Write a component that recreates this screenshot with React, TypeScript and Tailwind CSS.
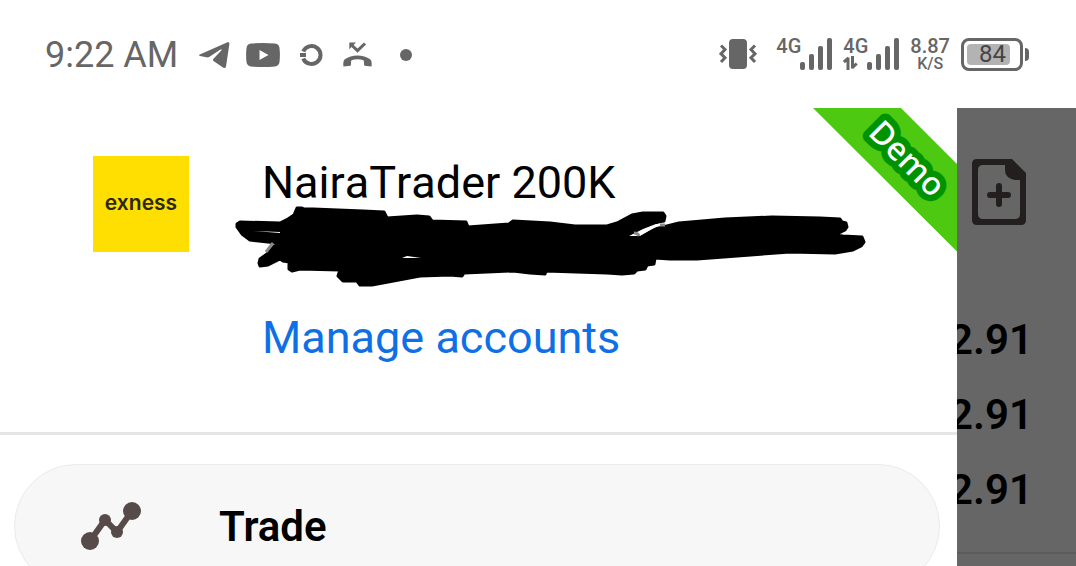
import React from 'react';

const prices = [
  { id: 1, value: '2.91' },
  { id: 2, value: '2.91' },
  { id: 3, value: '2.91' },
];

const TelegramIcon = () => (
  <svg width="31" height="27" viewBox="0 0 31 27" fill="currentColor">
    <path d="M.8 12.500L28.500.300Q30.600-.200 30.400 2L27 24.500Q26.400 27 24 25.500L14.500 19Q13.300 18 14.500 16.700L22.500 8.200Q23.200 7 21.500 7.600L10.500 14.800Q9 15.700 7.500 15.300L1 14Q-.600 13.300.8 12.500Z" />
  </svg>
);

const YoutubeIcon = () => (
  <svg width="34" height="24" viewBox="0 0 34 24" fill="currentColor">
    <path
      fillRule="evenodd"
      d="M5 .6Q17-.5 29 .6 33 1 33.5 5 34.3 12 33.5 19 33 23 29 23.4 17 24.5 5 23.4 1 23 .5 19-.3 12 .5 5 1 1 5 .6ZM13.5 7v10l9-5Z"
    />
  </svg>
);

const RingIcon = () => (
  <svg width="23" height="24" viewBox="0 0 23 24" fill="none" stroke="currentColor">
    <path d="M3.200 8.600A9 9 0 1 1 3.200 15.400" strokeWidth="4" />
    <path d="M0 12h6" strokeWidth="4" />
  </svg>
);

const MissedCallIcon = () => (
  <svg width="29" height="26" viewBox="0 0 29 26" fill="none">
    <path d="M8.500 3l6 5.700L22 1.500" stroke="currentColor" strokeWidth="3" />
    <path d="M6.300.500h6.700L6.300 7.300z" fill="currentColor" />
    <path
      d="M.5 24.500C0 22 .2 19.500 1.500 17.500 9 12.300 20 12.300 27.500 17.500 28.800 19.500 29 22 28.500 24.500L21.500 23.800C20.500 22.500 21.500 19.800 20.500 18.200 17 17 12 17 8.500 18.200 7.500 19.800 8.500 22.500 7.500 23.800Z"
      fill="currentColor"
    />
  </svg>
);

const VibrateIcon = () => (
  <svg width="38" height="32" viewBox="0 0 38 32" fill="none" stroke="currentColor" strokeWidth="3">
    <rect x="10" y="1" width="18" height="30" rx="4" fill="currentColor" stroke="none" />
    <path d="M2 7.500l4 4-4 4.300 4 4-4 4.200M36 7.500l-4 4 4 4.300-4 4 4 4.200" />
  </svg>
);

const SignalBars = () => (
  <svg width="32" height="32" viewBox="0 0 32 32" fill="currentColor">
    <rect x="0" y="24" width="5" height="8" rx="2" />
    <rect x="9" y="16" width="5" height="16" rx="2" />
    <rect x="18" y="8" width="5" height="24" rx="2" />
    <rect x="27" y="0" width="5" height="32" rx="2" />
  </svg>
);

const DataArrows = () => (
  <svg width="15" height="14" viewBox="0 0 15 14" fill="none" stroke="currentColor" strokeWidth="3">
    <path d="M5 14V1.500M5.500 2L.800 6M9.500 0v12.500M9 12l4.700-4.500" />
  </svg>
);

const Network = ({ data }: { data?: boolean }) => (
  <div className="flex">
    <div className="flex h-8 w-6 flex-col justify-between">
      <span className="text-[20px] leading-4 font-medium">4G</span>
      {data && <DataArrows />}
    </div>
    <SignalBars />
  </div>
);

const StatusBar = () => (
  <header className="flex h-[108px] shrink-0 items-center justify-between pr-[47px] pl-[45px] text-[#666]">
    <div className="flex items-center pt-0.5">
      <time className="text-[36px] leading-[42px]">9:22 AM</time>
      <div className="ml-[21px] flex items-center">
        <TelegramIcon />
        <div className="ml-4 flex items-center gap-5">
          <YoutubeIcon />
          <RingIcon />
          <MissedCallIcon />
        </div>
        <span className="ml-7 size-3 rounded-full bg-current" />
      </div>
    </div>
    <div className="flex items-center gap-[11px]">
      <div className="mr-2">
        <VibrateIcon />
      </div>
      <Network />
      <Network data />
      <div className="flex h-8 flex-col items-center justify-between font-medium">
        <span className="text-[20px] leading-4">8.87</span>
        <span className="text-[16px] leading-3">K/S</span>
      </div>
      <div className="flex items-center gap-0.5">
        <div className="flex h-[33px] w-[62px] rounded-lg border-[3px] border-current p-[3px]">
          <div className="flex w-[43px] items-center justify-end rounded-sm bg-[#b3b3b3] pr-1 text-[24px] text-[#444]">
            84
          </div>
        </div>
        <span className="h-[13px] w-1 rounded-r bg-current" />
      </div>
    </div>
  </header>
);

const Scribble = () => (
  <svg
    className="-ml-7 block shrink-0 overflow-visible"
    width="634"
    height="77"
    viewBox="234 210 634 77"
    aria-hidden="true"
  >
    <path
      fillRule="evenodd"
      d="M240 222L280 223 288 219 294 215 297 208 302 208 304 209 313 209 363 211 384 212 387 218 417 216 429 217 432 221 466 222 468 227 509 224 513 221 550 223 575 226 607 226 617 223 632 215 643 213 663 213 665 216 664 221 658 222 643 228 628 237 640 237 655 229 667 226 679 223 725 219 772 217 820 218 840 219 842 222 846 223 847 227 845 230 835 235 843 236 862 237 864 242 861 246 853 250 835 253 790 252 697 259 670 259 655 258 654 264 647 265 645 269 637 270 634 273 622 274 607 273 546 271 545 274 530 273 513 271 464 273 462 276 450 275 420 276 372 285 360 285 357 281 343 281 338 276 340 270 300 269 292 271 289 269 289 262 283 261 280 259 268 265 260 266 259 263 260 259 267 254 277 243 250 240 242 234 237 227 237 224Z"
      stroke="#000"
      strokeWidth="3"
      strokeLinejoin="round"
    />
    <path d="M254 231l26 1v1ZM402 258h19l-14-2Z" fill="#fff" />
    <path d="M629 236l14-7 13-5h6l-10 5-12 7Z" fill="#fff" />
    <path d="M266 252l7-9" stroke="#8a8a8a" strokeWidth="3" />
    <path d="M634 233q4 0 5 3M660 225h5" stroke="#8a8a8a" strokeWidth="3" fill="none" />
  </svg>
);

const DemoRibbon = () => (
  <svg className="absolute top-0 right-0" width="144" height="144" viewBox="0 0 144 144">
    <path d="M0 0h88l56 56v87.500z" fill="#4dc911" />
    <text
      transform="translate(54 26) rotate(45)"
      className="font-['Noto_Sans',sans-serif] text-[32px] font-medium"
      fill="#fff"
      stroke="#009300"
      strokeWidth="13"
      strokeLinejoin="round"
      paintOrder="stroke"
    >
      Demo
    </text>
  </svg>
);

const TimelineIcon = () => (
  <svg width="60" height="48" viewBox="0 0 60 48" fill="#564b48">
    <path d="M9 39L24 18 36 30 51 9" fill="none" stroke="#564b48" strokeWidth="6" />
    <circle cx="9" cy="39" r="9" />
    <circle cx="24" cy="18" r="6" />
    <circle cx="36" cy="30" r="6" />
    <circle cx="51" cy="9" r="9" />
  </svg>
);

const NewOrderIcon = () => (
  <svg width="54" height="66" viewBox="0 0 54 66" fill="#231f1f">
    <path
      fillRule="evenodd"
      d="M5 0H40L54 14V61Q54 66 49 66H5Q0 66 0 61V5Q0 0 5 0ZM11 6Q6 6 6 11V55Q6 60 11 60H43Q48 60 48 55V21H43Q33 19 33 11V6Z"
    />
    <path d="M27 27v18M18 36h18" stroke="#231f1f" strokeWidth="6" strokeLinecap="round" />
  </svg>
);

const Drawer = () => (
  <aside className="relative min-w-0 flex-1 bg-white">
    <DemoRibbon />
    <section className="flex gap-[73px] border-b-[3px] border-[#e6e6e6] pt-12 pb-[67px] pl-[93px]">
      <div className="flex size-24 shrink-0 items-center justify-center bg-[#ffde02] pb-0.5 font-['Inter',sans-serif] text-[21px] font-semibold text-[#2b2710]">
        exness
      </div>
      <div className="min-w-0">
        <h1 className="text-[45px] leading-[54px] whitespace-nowrap text-black [font-kerning:none]">
          NairaTrader 200K
        </h1>
        <Scribble />
        <a href="#accounts" className="mt-6 block text-[45px] leading-[54px] whitespace-nowrap text-[#0f70e6]">
          Manage accounts
        </a>
      </div>
    </section>
    <nav className="pt-[29px] pr-[17px] pl-[14px]">
      <button
        type="button"
        className="flex h-[124px] w-full items-center gap-[78px] rounded-full border border-[#ebebeb] bg-[#f7f7f7] pl-[66px] text-[42px] font-semibold text-black"
      >
        <TimelineIcon />
        Trade
      </button>
    </nav>
  </aside>
);

const TradeBackdrop = () => (
  <main className="w-[119px] shrink-0 overflow-hidden bg-[#666] pt-[51px]">
    <button type="button" aria-label="New order" className="ml-[15px] block">
      <NewOrderIcon />
    </button>
    <ul className="mt-[77px] border-b-2 border-[#5c5c5c] pr-[43px] pb-[25px] text-[42px] leading-[75px] font-semibold text-black">
      {prices.map((price) => (
        <li key={price.id} className="flex justify-end">
          {price.value}
        </li>
      ))}
    </ul>
  </main>
);

export default function App() {
  return (
    <div className="flex h-screen flex-col overflow-hidden bg-white font-['Roboto',sans-serif]">
      <StatusBar />
      <div className="flex min-h-0 flex-1">
        <Drawer />
        <TradeBackdrop />
      </div>
    </div>
  );
}
